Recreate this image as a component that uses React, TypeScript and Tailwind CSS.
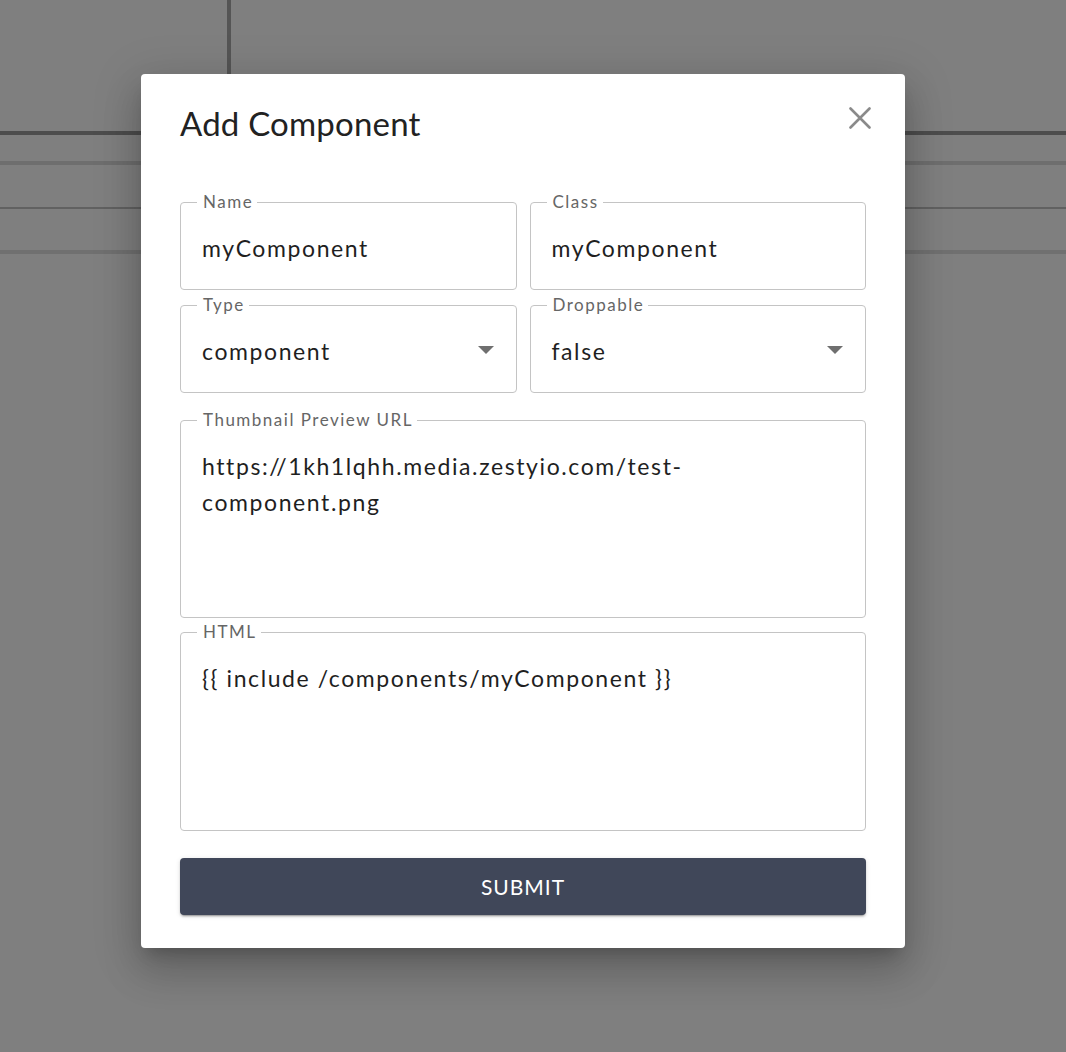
import React from "react";

const font = { fontFamily: "Lato, 'Open Sans', sans-serif" };

function Field({
  label,
  value,
  select,
  height,
}: {
  label: string;
  value: React.ReactNode;
  select?: boolean;
  height: string;
}) {
  return (
    <div className={`relative rounded-[4px] border border-[#c4c4c4] bg-white ${height}`}>
      <span className="absolute left-[16px] -top-[11px] bg-white pl-[6px] pr-[4px] text-[17px] leading-[20px] tracking-[1.5px] text-[#666666]">
        {label}
      </span>
      <div className="flex items-start justify-between pl-[21px] pr-[22px] pt-[27px]">
        <div className="text-[23px] leading-[36px] tracking-[1.6px] text-[#1f1f1f]">{value}</div>
        {select && (
          <svg width="16" height="8" viewBox="0 0 16 8" className="mt-[13px] shrink-0">
            <path d="M0 0 L16 0 L8 8 Z" fill="#6f6f6f" />
          </svg>
        )}
      </div>
    </div>
  );
}

export default function App() {
  return (
    <div className="relative h-[1052px] w-full overflow-hidden bg-[#7f7f7f]" style={font}>
      <div className="h-[131px] w-[231px] border-r-[4px] border-[#555555]" />
      <div className="h-[4px] bg-[#4d4d4d]" />
      <div className="h-[26px]" />
      <div className="h-[4px] bg-[#6e6e6e]" />
      <div className="h-[42px]" />
      <div className="h-[2px] bg-[#616161]" />
      <div className="h-[41px]" />
      <div className="h-[4px] bg-[#707070]" />

      <div className="absolute left-[141px] top-[74px] w-[764px] rounded-[4px] bg-white px-[39px] pb-[33px] pt-[29px] shadow-[0_11px_15px_-7px_rgba(0,0,0,0.2),0_24px_38px_3px_rgba(0,0,0,0.14),0_9px_46px_8px_rgba(0,0,0,0.12)]">
        <h2 className="text-[33px] font-normal leading-[40px] tracking-[0.2px] text-[#222222]">Add Component</h2>
        <button className="absolute right-[34px] top-[33px]" aria-label="close">
          <svg width="22" height="22" viewBox="0 0 22 22">
            <path d="M1.5 1.5 L20.5 20.5 M20.5 1.5 L1.5 20.5" stroke="#8a8a8a" strokeWidth="2.6" strokeLinecap="round" />
          </svg>
        </button>

        <div className="mt-[59px] grid grid-cols-2 gap-x-[13px] gap-y-[15px]">
          <Field label="Name" value="myComponent" height="h-[88px]" />
          <Field label="Class" value="myComponent" height="h-[88px]" />
          <Field label="Type" value="component" select height="h-[88px]" />
          <Field label="Droppable" value="false" select height="h-[88px]" />
        </div>

        <div className="mt-[27px]">
          <Field
            label="Thumbnail Preview URL"
            height="h-[198px]"
            value={
              <>
                https://1kh1lqhh.media.zestyio.com/test-
                <br />
                component.png
              </>
            }
          />
        </div>
        <div className="mt-[14px]">
          <Field label="HTML" height="h-[199px]" value="{{ include /components/myComponent }}" />
        </div>

        <button className="mt-[27px] flex h-[57px] w-full items-center justify-center rounded-[4px] bg-[#404759] text-[21px] tracking-[1px] text-white shadow-[0_3px_1px_-2px_rgba(0,0,0,0.2),0_2px_2px_0_rgba(0,0,0,0.14),0_1px_5px_0_rgba(0,0,0,0.12)]">
          SUBMIT
        </button>
      </div>
    </div>
  );
}
